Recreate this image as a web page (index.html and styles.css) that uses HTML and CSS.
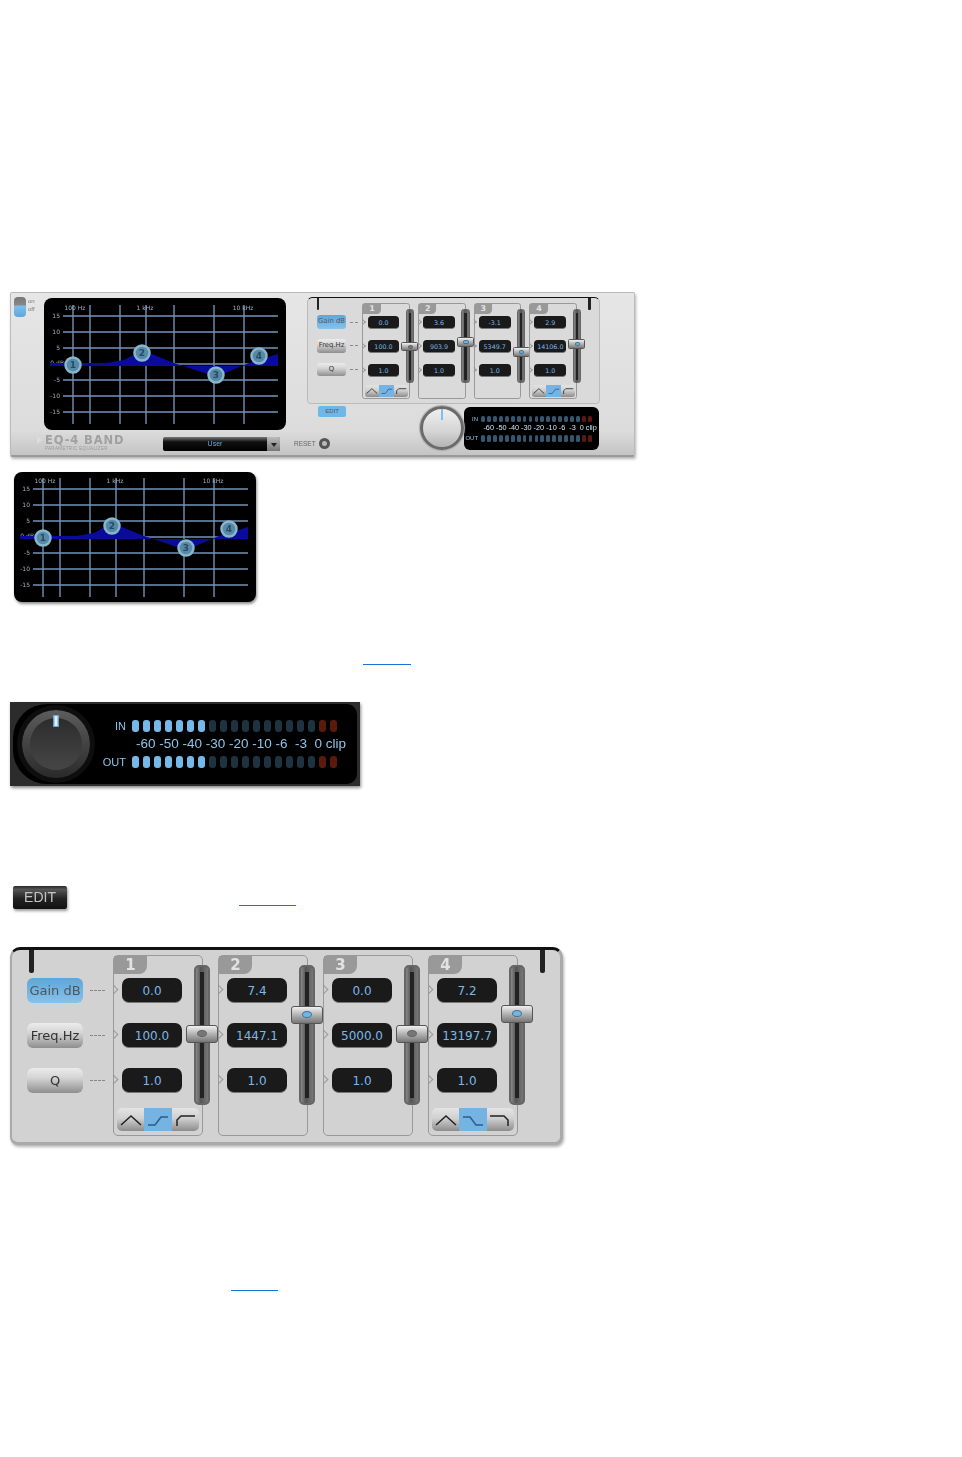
FILE: index.html
```html
<!DOCTYPE html>
<html lang="en">
<head>
    <meta charset="UTF-8">
    <meta name="viewport" content="width=device-width, initial-scale=1.0">
    <title>EQ-4 Band</title>
    <link rel="stylesheet" href="styles.css">
</head>
<body>
    <!-- Full plugin -->
    <div class="eq-panel">
        <div class="eq-left">
            <div class="eq-top">
                <div class="power">
                    <div class="power-switch"></div>
                    <div class="power-labels"><span>on</span><span>off</span></div>
                </div>
                <div class="graph graph-main">
                    <svg width="242" height="132" viewBox="0 -1 242 132">
                        <g class="grid">
                            <path d="M19 17H234M19 33H234M19 49H234M19 65H234M19 81H234M19 97H234M19 113H234"/>
                            <path d="M29 6V125M46 6V125M76 6V125M102 6V125M130 6V125M170 6V125M200 6V125"/>
                        </g>
                        <g class="axis">
                            <text x="31" y="11" text-anchor="middle">100 Hz</text>
                            <text x="101" y="11" text-anchor="middle">1 kHz</text>
                            <text x="199" y="11" text-anchor="middle">10 kHz</text>
                            <text x="16" y="19" text-anchor="end">15</text>
                            <text x="16" y="35" text-anchor="end">10</text>
                            <text x="16" y="51" text-anchor="end">5</text>
                            <text x="20" y="66" text-anchor="end">0 dB</text>
                            <text x="16" y="83" text-anchor="end">-5</text>
                            <text x="16" y="99" text-anchor="end">-10</text>
                            <text x="16" y="115" text-anchor="end">-15</text>
                        </g>
                        <path class="curve" d="M6 64H62L80 61L98 51L130 64L172 78L205 64L234 55V67H6Z"/>
                        <g class="nodes">
                            <circle cx="29" cy="66" r="7.5"/><text x="29" y="69">1</text>
                            <circle cx="98" cy="54" r="7.5"/><text x="98" y="57">2</text>
                            <circle cx="172" cy="76" r="7.5"/><text x="172" y="79">3</text>
                            <circle cx="215" cy="57" r="7.5"/><text x="215" y="60">4</text>
                        </g>
                    </svg>
                </div>
            </div>
            <div class="eq-footer">
                <div class="logo-mark"></div>
                <div class="logo">
                    <div class="logo-name">EQ-4 BAND</div>
                    <div class="logo-sub">PARAMETRIC EQUALIZER</div>
                </div>
                <div class="preset">
                    <span class="preset-name">User</span>
                    <span class="preset-arrow"></span>
                </div>
            </div>
        </div>
        <div class="eq-right">
            <div class="band-panel band-panel-mini">
                <span class="tick tick-left"></span>
                <span class="tick tick-right"></span>
                <div class="labels">
                    <div class="label-row"><span class="label label-on">Gain dB</span><span class="dash"></span></div>
                    <div class="label-row"><span class="label">Freq.Hz</span><span class="dash"></span></div>
                    <div class="label-row"><span class="label">Q</span><span class="dash"></span></div>
                </div>
                <div class="band">
                    <div class="band-tab">1</div>
                    <div class="values"><div class="value">0.0</div><div class="value">100.0</div><div class="value">1.0</div></div>
                    <div class="filters">
                        <span class="filter"><svg width="26" height="22" viewBox="0 0 26 22"><path d="M3 16L13 7L23 16"/></svg></span>
                        <span class="filter filter-on"><svg width="26" height="22" viewBox="0 0 26 22"><path d="M3 16H10L16 8H23"/></svg></span>
                        <span class="filter"><svg width="26" height="22" viewBox="0 0 26 22"><path d="M5 17V11L9 7H23"/></svg></span>
                    </div>
                    <div class="slider"><div class="thumb" style="top:60px"></div></div>
                </div>
                <div class="band">
                    <div class="band-tab">2</div>
                    <div class="values"><div class="value">3.6</div><div class="value">903.9</div><div class="value">1.0</div></div>
                    <div class="slider"><div class="thumb thumb-on" style="top:51px"></div></div>
                </div>
                <div class="band">
                    <div class="band-tab">3</div>
                    <div class="values"><div class="value">-3.1</div><div class="value">5349.7</div><div class="value">1.0</div></div>
                    <div class="slider"><div class="thumb thumb-on" style="top:70px"></div></div>
                </div>
                <div class="band">
                    <div class="band-tab">4</div>
                    <div class="values"><div class="value">2.9</div><div class="value">14106.0</div><div class="value">1.0</div></div>
                    <div class="filters">
                        <span class="filter"><svg width="26" height="22" viewBox="0 0 26 22"><path d="M3 16L13 7L23 16"/></svg></span>
                        <span class="filter filter-on"><svg width="26" height="22" viewBox="0 0 26 22"><path d="M3 16H10L16 8H23"/></svg></span>
                        <span class="filter"><svg width="26" height="22" viewBox="0 0 26 22"><path d="M5 17V11L9 7H23"/></svg></span>
                    </div>
                    <div class="slider"><div class="thumb thumb-on" style="top:55px"></div></div>
                </div>
            </div>
            <div class="eq-bottom">
                <div class="eq-actions">
                    <div class="edit-mini">EDIT</div>
                    <div class="reset"><span>RESET</span><span class="reset-btn"></span></div>
                </div>
                <div class="knob knob-light"><span class="knob-mark"></span></div>
                <div class="meter-mini">
                    <div class="meter-rows">
                        <div class="led-row">
                            <span class="led-label">IN</span>
                            <div class="leds">
                                <i class="led led-dim"></i><i class="led led-dim"></i><i class="led led-dim"></i><i class="led led-dim"></i><i class="led led-dim"></i><i class="led led-dim"></i><i class="led led-dim"></i><i class="led led-dim"></i><i class="led led-dim"></i><i class="led led-dim"></i><i class="led led-dim"></i><i class="led led-dim"></i><i class="led led-dim"></i><i class="led led-dim"></i><i class="led led-dim"></i><i class="led led-dim"></i><i class="led led-dim"></i><i class="led led-clip"></i><i class="led led-clip"></i>
                            </div>
                        </div>
                        <div class="scale">-60 -50 -40 -30 -20 -10 -6  -3  0 clip</div>
                        <div class="led-row">
                            <span class="led-label">OUT</span>
                            <div class="leds">
                                <i class="led led-dim"></i><i class="led led-dim"></i><i class="led led-dim"></i><i class="led led-dim"></i><i class="led led-dim"></i><i class="led led-dim"></i><i class="led led-dim"></i><i class="led led-dim"></i><i class="led led-dim"></i><i class="led led-dim"></i><i class="led led-dim"></i><i class="led led-dim"></i><i class="led led-dim"></i><i class="led led-dim"></i><i class="led led-dim"></i><i class="led led-dim"></i><i class="led led-dim"></i><i class="led led-clip"></i><i class="led led-clip"></i>
                            </div>
                        </div>
                    </div>
                </div>
            </div>
        </div>
    </div>

    <!-- Graph on its own -->
    <div class="graph graph-alone">
        <svg width="242" height="130" viewBox="0 0 242 130">
            <g class="grid">
                <path d="M19 17H234M19 33H234M19 49H234M19 65H234M19 81H234M19 97H234M19 113H234"/>
                <path d="M29 6V125M46 6V125M76 6V125M102 6V125M130 6V125M170 6V125M200 6V125"/>
            </g>
            <g class="axis">
                <text x="31" y="11" text-anchor="middle">100 Hz</text>
                <text x="101" y="11" text-anchor="middle">1 kHz</text>
                <text x="199" y="11" text-anchor="middle">10 kHz</text>
                <text x="16" y="19" text-anchor="end">15</text>
                <text x="16" y="35" text-anchor="end">10</text>
                <text x="16" y="51" text-anchor="end">5</text>
                <text x="20" y="66" text-anchor="end">0 dB</text>
                <text x="16" y="83" text-anchor="end">-5</text>
                <text x="16" y="99" text-anchor="end">-10</text>
                <text x="16" y="115" text-anchor="end">-15</text>
            </g>
            <path class="curve" d="M6 64H62L80 61L98 51L130 64L172 78L205 64L234 55V67H6Z"/>
            <g class="nodes">
                <circle cx="29" cy="66" r="7.5"/><text x="29" y="69">1</text>
                <circle cx="98" cy="54" r="7.5"/><text x="98" y="57">2</text>
                <circle cx="172" cy="76" r="7.5"/><text x="172" y="79">3</text>
                <circle cx="215" cy="57" r="7.5"/><text x="215" y="60">4</text>
            </g>
        </svg>
    </div>

    <a class="blank-link link-graph" href="#"></a>

    <!-- Output level meter -->
    <div class="meter">
        <div class="meter-inner">
            <div class="knob knob-dark"><span class="knob-mark"></span></div>
            <div class="meter-rows">
                <div class="led-row">
                    <span class="led-label">IN</span>
                    <div class="leds">
                        <i class="led led-on"></i><i class="led led-on"></i><i class="led led-on"></i><i class="led led-on"></i><i class="led led-on"></i><i class="led led-on"></i><i class="led led-on"></i><i class="led"></i><i class="led"></i><i class="led"></i><i class="led"></i><i class="led"></i><i class="led"></i><i class="led"></i><i class="led"></i><i class="led"></i><i class="led"></i><i class="led led-clip"></i><i class="led led-clip"></i>
                    </div>
                </div>
                <div class="scale">-60 -50 -40 -30 -20 -10 -6  -3  0 clip</div>
                <div class="led-row">
                    <span class="led-label">OUT</span>
                    <div class="leds">
                        <i class="led led-on"></i><i class="led led-on"></i><i class="led led-on"></i><i class="led led-on"></i><i class="led led-on"></i><i class="led led-on"></i><i class="led led-on"></i><i class="led"></i><i class="led"></i><i class="led"></i><i class="led"></i><i class="led"></i><i class="led"></i><i class="led"></i><i class="led"></i><i class="led"></i><i class="led"></i><i class="led led-clip"></i><i class="led led-clip"></i>
                    </div>
                </div>
            </div>
        </div>
    </div>

    <div class="edit-row">
        <div class="edit-btn">EDIT</div>
        <a class="blank-link link-edit" href="#"></a>
    </div>

    <!-- Band editor -->
    <div class="band-panel band-panel-large">
        <span class="tick tick-left"></span>
        <span class="tick tick-right"></span>
        <div class="labels">
            <div class="label-row"><span class="label label-on">Gain dB</span><span class="dash"></span></div>
            <div class="label-row"><span class="label">Freq.Hz</span><span class="dash"></span></div>
            <div class="label-row"><span class="label">Q</span><span class="dash"></span></div>
        </div>
        <div class="band">
            <div class="band-tab">1</div>
            <div class="values"><div class="value">0.0</div><div class="value">100.0</div><div class="value">1.0</div></div>
            <div class="filters">
                <span class="filter"><svg width="26" height="22" viewBox="0 0 26 22"><path d="M3 16L13 7L23 16"/></svg></span>
                <span class="filter filter-on"><svg width="26" height="22" viewBox="0 0 26 22"><path d="M3 16H10L16 8H23"/></svg></span>
                <span class="filter"><svg width="26" height="22" viewBox="0 0 26 22"><path d="M5 17V11L9 7H23"/></svg></span>
            </div>
            <div class="slider"><div class="thumb" style="top:58px"></div></div>
        </div>
        <div class="band">
            <div class="band-tab">2</div>
            <div class="values"><div class="value">7.4</div><div class="value">1447.1</div><div class="value">1.0</div></div>
            <div class="slider"><div class="thumb thumb-on" style="top:39px"></div></div>
        </div>
        <div class="band">
            <div class="band-tab">3</div>
            <div class="values"><div class="value">0.0</div><div class="value">5000.0</div><div class="value">1.0</div></div>
            <div class="slider"><div class="thumb" style="top:58px"></div></div>
        </div>
        <div class="band">
            <div class="band-tab">4</div>
            <div class="values"><div class="value">7.2</div><div class="value">13197.7</div><div class="value">1.0</div></div>
            <div class="filters">
                <span class="filter"><svg width="26" height="22" viewBox="0 0 26 22"><path d="M3 16L13 7L23 16"/></svg></span>
                <span class="filter filter-on"><svg width="26" height="22" viewBox="0 0 26 22"><path d="M3 8H10L16 16H23"/></svg></span>
                <span class="filter"><svg width="26" height="22" viewBox="0 0 26 22"><path d="M3 7H17L21 11V17"/></svg></span>
            </div>
            <div class="slider"><div class="thumb thumb-on" style="top:38px"></div></div>
        </div>
    </div>

    <a class="blank-link link-bands" href="#"></a>
</body>
</html>
```

FILE: styles.css
```css
body {
    margin: 0;
    padding: 292px 0 0;
    min-height: 1165px;
    background-color: #fff;
    font-family: 'Liberation Sans', sans-serif;
    color: #222;
    overflow: hidden;
}

/* Full plugin */
.eq-panel {
    display: flex;
    box-sizing: border-box;
    width: 625px;
    height: 165px;
    margin-left: 10px;
    background: linear-gradient(#e6e6e6, #dcdcdc 85%, #c4c4c4);
    border: 1px solid #bbb;
    border-bottom: 2px solid #999;
    border-radius: 2px;
    box-shadow: 1px 2px 3px rgba(0, 0, 0, 0.3);
    filter: blur(0.6px);
}
.eq-left {
    width: 283px;
    padding: 4px 0 0 3px;
    box-sizing: border-box;
}
.eq-top {
    display: flex;
}
.power {
    display: flex;
    width: 30px;
    gap: 2px;
}
.power-switch {
    width: 12px;
    height: 20px;
    border-radius: 4px;
    background: linear-gradient(#777 0, #888 40%, #7cc0ec 45%, #5ea6da);
}
.power-labels {
    display: flex;
    flex-direction: column;
    gap: 2px;
    font-size: 6px;
    color: #777;
    padding-top: 1px;
}
.graph {
    background-color: #000;
    border-radius: 8px;
}
.graph svg {
    display: block;
}
.graph-main {
    width: 242px;
    height: 132px;
    margin-top: 1px;
}
.graph-alone {
    width: 242px;
    height: 130px;
    margin: 15px 0 0 14px;
    box-shadow: 1px 2px 3px rgba(0, 0, 0, 0.45);
    filter: blur(0.6px);
}
.grid path {
    fill: none;
    stroke: #7393b5;
    stroke-width: 1.4;
}
.axis text {
    font-family: 'DejaVu Sans', sans-serif;
    font-size: 6px;
    fill: #a4b0be;
}
.curve {
    fill: #0a0a9c;
}
.nodes circle {
    fill: #5688a8;
    stroke: #88b6cc;
    stroke-width: 2.5;
}
.nodes text {
    font-family: 'DejaVu Sans', sans-serif;
    font-size: 9px;
    font-weight: bold;
    text-anchor: middle;
    fill: #2a4a60;
}
.eq-footer {
    display: flex;
    align-items: flex-start;
    margin-top: 4px;
    padding-left: 23px;
}
.logo-mark {
    width: 0;
    height: 0;
    margin: 2px 3px 0 0;
    border-left: 5px solid #ddd;
    border-top: 4px solid transparent;
    border-bottom: 4px solid transparent;
}
.logo {
    width: 118px;
}
.logo-name {
    font-family: 'DejaVu Sans', sans-serif;
    font-size: 11.5px;
    font-weight: bold;
    letter-spacing: 0.9px;
    line-height: 12px;
    color: #a0a0a0;
    white-space: nowrap;
}
.logo-sub {
    font-size: 4.5px;
    color: #999;
    letter-spacing: 0.35px;
    line-height: 6px;
}
.preset {
    display: flex;
    justify-content: space-between;
    position: relative;
    width: 117px;
    height: 14px;
    margin-top: 3px;
    border-radius: 2px;
    background: linear-gradient(#777, #111 35%, #000);
}
.preset-name {
    width: 104px;
    text-align: center;
    font-size: 7px;
    line-height: 13px;
    color: #6fa8d8;
}
.preset-arrow {
    width: 13px;
    height: 14px;
    background: linear-gradient(#bbb, #777);
    border-radius: 0 2px 2px 0;
}
.preset-arrow::after {
    content: "";
    display: block;
    width: 0;
    margin: 6px auto 0;
    border-top: 4px solid #222;
    border-left: 3px solid transparent;
    border-right: 3px solid transparent;
}
.eq-right {
    width: 340px;
    padding-top: 4px;
    box-sizing: border-box;
}
.eq-bottom {
    display: flex;
}
.eq-actions {
    display: flex;
    flex-direction: column;
    width: 126px;
    height: 53px;
    box-sizing: border-box;
}
.edit-mini {
    width: 28px;
    height: 11px;
    margin: 2px 0 0 24px;
    border-radius: 2px;
    background-color: #6fb7e8;
    font-size: 6px;
    line-height: 11px;
    text-align: center;
    color: #555;
}
.reset {
    display: flex;
    align-items: center;
    gap: 3px;
    margin-top: 21px;
    font-size: 6.5px;
    color: #666;
}
.reset-btn {
    width: 5px;
    height: 5px;
    border: 3px solid #555;
    border-radius: 50%;
    background-color: #bbb;
}

/* Knobs */
.knob {
    position: relative;
    flex: none;
    border-radius: 50%;
}
.knob-mark {
    position: absolute;
    left: 50%;
    transform: translateX(-50%);
}
.knob-light {
    width: 38px;
    height: 38px;
    margin-top: 2px;
    border: 3px solid #6a6a6a;
    background: linear-gradient(#efefef, #d4d4d4 60%, #b4b4b4);
    box-shadow: 0 0 1px 1px #aaa;
}
.knob-light .knob-mark {
    top: 0;
    width: 2px;
    height: 11px;
    background-color: #7fc0ea;
}
.knob-dark {
    width: 68px;
    height: 68px;
    margin-left: 9px;
    background: linear-gradient(#5c5c5c, #2a2a2a);
    box-shadow: 0 0 0 5px #0e0e0e;
}
.knob-dark::after {
    content: "";
    position: absolute;
    left: 8px;
    top: 8px;
    width: 52px;
    height: 52px;
    border-radius: 50%;
    background: linear-gradient(#2c2c2c, #464646);
}
.knob-dark .knob-mark {
    top: 5px;
    width: 5px;
    height: 12px;
    background-color: #dff0fb;
    border: 1px solid #5fa8dc;
    box-sizing: border-box;
    z-index: 1;
}

/* Level meter */
.meter {
    box-sizing: border-box;
    width: 350px;
    height: 84px;
    margin: 37px 0 0 10px;
    padding: 2px 3px;
    background-color: #2c2c2c;
    box-shadow: 1px 2px 3px rgba(0, 0, 0, 0.45);
    filter: blur(0.4px);
}
.meter-inner {
    display: flex;
    align-items: center;
    height: 80px;
    background-color: #000;
    border-radius: 34px 10px 10px 34px;
}
.meter-inner .meter-rows {
    margin-left: 10px;
}
.meter-rows {
    width: 250px;
    flex: none;
}
.led-row {
    display: flex;
    align-items: center;
    height: 12px;
}
.led-label {
    width: 26px;
    margin-right: 6px;
    text-align: right;
    font-size: 11px;
    color: #8cc4ea;
}
.leds {
    display: flex;
    gap: 4px;
}
.led {
    width: 7px;
    height: 12px;
    border-radius: 3px;
    background-color: #1e3240;
}
.led-on {
    background-color: #76b8e8;
}
.led-dim {
    background-color: #35566f;
}
.led-clip {
    background-color: #5a1a0c;
}
.scale {
    height: 24px;
    margin-left: 36px;
    white-space: pre;
    font-size: 13.5px;
    line-height: 24px;
    color: #8cc4ea;
}
.meter-mini {
    width: 135px;
    height: 43px;
    margin-top: 3px;
    background-color: #000;
    border-radius: 6px;
}
.meter-mini .meter-rows {
    zoom: 0.54;
    padding-top: 16px;
}
.meter-mini .scale {
    color: #cfe4f2;
}

/* Edit button and the links with no text */
.edit-row {
    display: flex;
    margin-top: 100px;
    height: 24px;
}
.edit-btn {
    width: 54px;
    height: 23px;
    margin-left: 13px;
    border-radius: 2px;
    background: linear-gradient(#2a2a2a, #555 15%, #222 55%, #111);
    box-shadow: 1px 2px 3px rgba(0, 0, 0, 0.4);
    font-size: 14px;
    line-height: 23px;
    text-align: center;
    color: #c4c4c4;
    filter: blur(0.4px);
}
.blank-link {
    display: block;
    height: 1px;
    background-color: #1a73d8;
}
.link-graph {
    width: 48px;
    margin: 62px 0 0 363px;
}
.link-edit {
    width: 57px;
    margin: 19px 0 0 172px;
}
.link-bands {
    width: 47px;
    margin: 145px 0 0 231px;
}

/* Band editor, also used shrunk inside the full plugin */
.band-panel {
    position: relative;
    display: flex;
    box-sizing: border-box;
    width: 553px;
    background-color: #d2d2d2;
    border-top: 3px solid #111;
    border-radius: 10px 10px 8px 8px;
}
.band-panel-large {
    height: 198px;
    margin: 37px 0 0 10px;
    padding: 5px 0 0 15px;
    border-right: 3px solid #aaa;
    border-bottom: 3px solid #aaa;
    border-left: 2px solid #aaa;
    box-shadow: 1px 2px 3px rgba(0, 0, 0, 0.3);
    filter: blur(0.4px);
}
.band-panel-mini {
    zoom: 0.53;
    height: 202px;
    margin-left: 24px;
    padding: 10px 0 0 17px;
    border-right: 3px solid #bbb;
    border-bottom: 3px solid #bbb;
    border-left: 3px solid #bbb;
    background-color: #dadada;
}
.tick {
    position: absolute;
    top: 0;
    width: 5px;
    height: 23px;
    background-color: #222;
    border-radius: 0 0 2px 2px;
}
.tick-left {
    left: 17px;
}
.tick-right {
    right: 15px;
}
.labels {
    display: flex;
    flex-direction: column;
    gap: 20px;
    width: 86px;
    padding-top: 23px;
    flex: none;
}
.label-row {
    display: flex;
    align-items: center;
    gap: 7px;
}
.label {
    width: 56px;
    height: 25px;
    border-radius: 6px;
    background: linear-gradient(#ececec, #d4d4d4 40%, #8e8e8e);
    font-family: 'DejaVu Sans', sans-serif;
    font-size: 13px;
    line-height: 25px;
    text-align: center;
    color: #333;
    white-space: nowrap;
}
.label-on {
    background: linear-gradient(#5ea6da, #86c2ec);
    color: #555;
}
.dash {
    width: 15px;
    border-top: 1px dashed #888;
}
.band {
    position: relative;
    display: flex;
    flex-direction: column;
    box-sizing: border-box;
    width: 90px;
    height: 181px;
    margin-right: 15px;
    border: 1px solid #999;
    border-radius: 5px;
    flex: none;
}
.band-tab {
    width: 33px;
    height: 18px;
    background-color: #999;
    border-radius: 0 0 8px 0;
    font-family: 'DejaVu Sans', sans-serif;
    font-size: 15px;
    font-weight: bold;
    line-height: 18px;
    text-align: center;
    color: #e2e2e2;
}
.values {
    display: flex;
    flex-direction: column;
    gap: 20px;
    margin: 4px 0 0 8px;
}
.value {
    position: relative;
    width: 60px;
    height: 25px;
    border-radius: 7px;
    background-color: #1a1a1a;
    border-bottom: 1px solid #777;
    box-sizing: border-box;
    font-family: 'DejaVu Sans', sans-serif;
    font-size: 12px;
    line-height: 26px;
    text-align: center;
    color: #7ab8e8;
}
.value::before {
    content: "";
    position: absolute;
    left: -12px;
    top: 8px;
    width: 6px;
    height: 6px;
    border-top: 1px solid #999;
    border-right: 1px solid #999;
    transform: rotate(45deg);
}
.filters {
    display: flex;
    width: 82px;
    height: 23px;
    margin: 15px 0 0 3px;
    border-radius: 5px;
    overflow: hidden;
}
.filter {
    flex: 1;
    display: flex;
    justify-content: center;
    align-items: center;
    background: linear-gradient(#e4e4e4, #d0d0d0 45%, #8c8c8c);
}
.filter svg {
    display: block;
    fill: none;
    stroke: #222;
    stroke-width: 1.5;
}
.filter-on {
    background: #74b3e2;
}
.filter-on svg {
    stroke: #2a5f88;
}
.slider {
    position: absolute;
    left: 80px;
    top: 9px;
    box-sizing: border-box;
    width: 16px;
    height: 140px;
    border: 2px solid #666;
    border-radius: 5px;
    background: linear-gradient(90deg, #888, #555 40%, #777);
}
.slider::before {
    content: "";
    position: absolute;
    left: 4px;
    top: 5px;
    bottom: 5px;
    width: 4px;
    background-color: #222;
}
.thumb {
    position: absolute;
    left: -10px;
    width: 32px;
    height: 18px;
    box-sizing: border-box;
    border: 1px solid #555;
    border-radius: 3px;
    background: linear-gradient(#f0f0f0, #b8b8b8 45%, #777);
}
.thumb::after {
    content: "";
    position: absolute;
    left: 10px;
    top: 4px;
    width: 10px;
    height: 7px;
    border-radius: 50%;
    background-color: #777;
    border: 1px solid #666;
    box-sizing: border-box;
}
.thumb-on::after {
    background-color: #6fb7e8;
    border-color: #4a6f8c;
}
```
